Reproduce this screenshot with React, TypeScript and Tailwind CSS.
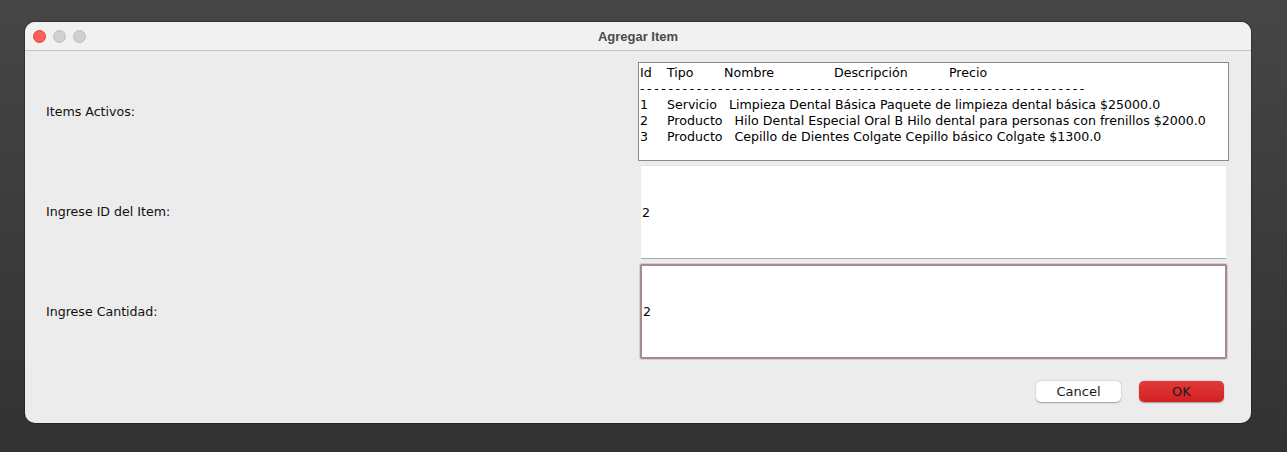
import React from "react";

const FONT = '"Lucida Grande", "DejaVu Sans", sans-serif';

export default function App() {
  const rows = [
    { id: "1", text: "Servicio   Limpieza Dental Básica Paquete de limpieza dental básica $25000.0" },
    { id: "2", text: "Producto   Hilo Dental Especial Oral B Hilo dental para personas con frenillos $2000.0" },
    { id: "3", text: "Producto   Cepillo de Dientes Colgate Cepillo básico Colgate $1300.0" },
  ];
  return (
    <div
      className="w-[1287px] h-[452px] bg-gradient-to-b from-[#464646] to-[#323232] pt-[22px] pl-[25px] overflow-hidden"
      style={{ fontFamily: FONT }}
    >
      <div className="w-[1226px] h-[401px] rounded-[10px] bg-[#ececec] overflow-hidden flex flex-col shadow-[0_0_0_1px_rgba(0,0,0,0.25)]">
        {/* Title bar */}
        <div className="relative h-[29px] shrink-0 bg-[#f1f1f1] border-b border-[#c4c4c4] flex items-center justify-center">
          <div className="absolute left-[8px] top-[8px] flex gap-[7px]">
            <span className="w-[13px] h-[13px] rounded-full bg-[#fe5f57] border border-[#e0443e]" />
            <span className="w-[13px] h-[13px] rounded-full bg-[#d0d0d0] border border-[#bcbcbc]" />
            <span className="w-[13px] h-[13px] rounded-full bg-[#d0d0d0] border border-[#bcbcbc]" />
          </div>
          <span className="text-[13px] font-bold text-[#4b4b4b] leading-none font-['Liberation_Sans',sans-serif]">
            Agregar Item
          </span>
        </div>

        {/* Body */}
        <div className="flex-1 pt-[11px] pl-[21px] pr-[22px] flex flex-col">
          <div className="grid grid-cols-[592px_591px] text-[12.6px] text-[#111]">
            {/* Row 1 */}
            <div className="h-[99px] flex items-center pt-[2px]">Items Activos:</div>
            <div className="h-[99px] bg-white border border-[#8a8a8a] pl-[1px] pt-[2px] leading-[16px] text-black overflow-hidden">
              <div className="flex whitespace-pre">
                <span className="w-[27px]">Id</span>
                <span className="w-[57px]">Tipo</span>
                <span className="w-[110px]">Nombre</span>
                <span className="w-[115px]">Descripción</span>
                <span>Precio</span>
              </div>
              <div className="whitespace-pre tracking-[2.55px]">{"-".repeat(63)}</div>
              {rows.map((r) => (
                <div key={r.id} className="flex whitespace-pre">
                  <span className="w-[27px]">{r.id}</span>
                  <span>{r.text}</span>
                </div>
              ))}
            </div>

            {/* Row 2 */}
            <div className="h-[100px] flex items-center pt-[3px]">Ingrese ID del Item:</div>
            <div className="h-[100px] pt-[4px] pb-[2px] pl-[3px] pr-[3px]">
              <div className="h-full bg-white border-t border-[#e2e2e2] border-b border-b-[#a9a9a9] flex items-center pl-[1px] pt-[2px] text-black">
                2
              </div>
            </div>

            {/* Row 3 */}
            <div className="h-[100px] flex items-center pt-[3px]">Ingrese Cantidad:</div>
            <div className="h-[100px] pt-[3px] pb-[2px] pl-[2px] pr-[2px]">
              <div className="h-full bg-white border-[2px] border-[#a88a8c] rounded-[2px] shadow-[0_0_0_1px_#d8cfd0] flex items-center pl-[1px] pt-[2px] text-black">
                2
              </div>
            </div>
          </div>

          {/* Buttons */}
          <div className="flex justify-end gap-[18px] pr-[5px] mt-[20px]">
            <button className="w-[85px] h-[21px] rounded-[5px] bg-white text-[13px] text-[#1a1a1a] leading-none shadow-[0_0.5px_1.5px_rgba(0,0,0,0.35)]">
              Cancel
            </button>
            <button className="w-[85px] h-[21px] rounded-[5px] bg-gradient-to-b from-[#e2393a] to-[#d21f22] text-[13px] text-[#1a1a1a] leading-none shadow-[0_0.5px_1.5px_rgba(0,0,0,0.35)]">
              OK
            </button>
          </div>
        </div>
      </div>
    </div>
  );
}
